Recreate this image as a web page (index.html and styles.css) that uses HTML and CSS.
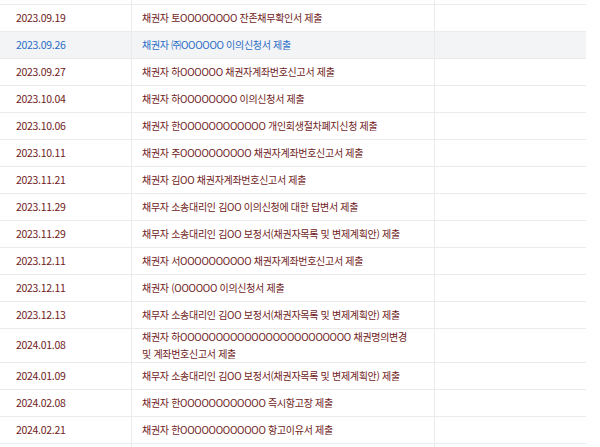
FILE: index.html
```
<!DOCTYPE html>
<html lang="ko">
<head>
<meta charset="utf-8">
<link rel="stylesheet" href="styles.css">
</head>
<body>
<div class="list">
  <div class="row"><div class="cell date"></div><div class="cell text"></div><div class="cell extra"></div></div>
  <div class="row"><div class="cell date">2023.09.19</div><div class="cell text">채권자 토OOOOOOOO 잔존채무확인서 제출</div><div class="cell extra"></div></div>
  <div class="row active"><div class="cell date">2023.09.26</div><div class="cell text">채권자 ㈜OOOOOO 이의신청서 제출</div><div class="cell extra"></div></div>
  <div class="row"><div class="cell date">2023.09.27</div><div class="cell text">채권자 하OOOOOO 채권자계좌번호신고서 제출</div><div class="cell extra"></div></div>
  <div class="row"><div class="cell date">2023.10.04</div><div class="cell text">채권자 하OOOOOOOO 이의신청서 제출</div><div class="cell extra"></div></div>
  <div class="row"><div class="cell date">2023.10.06</div><div class="cell text">채권자 한OOOOOOOOOOOO 개인회생절차폐지신청 제출</div><div class="cell extra"></div></div>
  <div class="row"><div class="cell date">2023.10.11</div><div class="cell text">채권자 주OOOOOOOOOO 채권자계좌번호신고서 제출</div><div class="cell extra"></div></div>
  <div class="row"><div class="cell date">2023.11.21</div><div class="cell text">채권자 김OO 채권자계좌번호신고서 제출</div><div class="cell extra"></div></div>
  <div class="row"><div class="cell date">2023.11.29</div><div class="cell text">채무자 소송대리인 김OO 이의신청에 대한 답변서 제출</div><div class="cell extra"></div></div>
  <div class="row"><div class="cell date">2023.11.29</div><div class="cell text">채무자 소송대리인 김OO 보정서(채권자목록 및 변제계획안) 제출</div><div class="cell extra"></div></div>
  <div class="row"><div class="cell date">2023.12.11</div><div class="cell text">채권자 서OOOOOOOOOO 채권자계좌번호신고서 제출</div><div class="cell extra"></div></div>
  <div class="row"><div class="cell date">2023.12.11</div><div class="cell text">채권자 (OOOOOO 이의신청서 제출</div><div class="cell extra"></div></div>
  <div class="row"><div class="cell date">2023.12.13</div><div class="cell text">채무자 소송대리인 김OO 보정서(채권자목록 및 변제계획안) 제출</div><div class="cell extra"></div></div>
  <div class="row"><div class="cell date">2024.01.08</div><div class="cell text">채권자 하OOOOOOOOOOOOOOOOOOOOOOOO 채권명의변경 및 계좌번호신고서 제출</div><div class="cell extra"></div></div>
  <div class="row"><div class="cell date">2024.01.09</div><div class="cell text">채무자 소송대리인 김OO 보정서(채권자목록 및 변제계획안) 제출</div><div class="cell extra"></div></div>
  <div class="row"><div class="cell date">2024.02.08</div><div class="cell text">채권자 한OOOOOOOOOOOO 즉시항고장 제출</div><div class="cell extra"></div></div>
  <div class="row"><div class="cell date">2024.02.21</div><div class="cell text">채권자 한OOOOOOOOOOOO 항고이유서 제출</div><div class="cell extra"></div></div>
  <div class="row"><div class="cell date"></div><div class="cell text"></div><div class="cell extra"></div></div>
</div>
</body>
</html>
```
FILE: styles.css
```
html, body {
  margin: 0;
  padding: 0;
  background: #ffffff;
}
body {
  font-family: "Noto Sans CJK KR", "Noto Sans", sans-serif;
  font-size: 10px;
  letter-spacing: -0.3px;
  color: #6f1b1b;
}
.list {
  width: 586px;
  margin-top: -22px;
}
.row {
  display: flex;
  min-height: 26px;
  border-bottom: 1px solid #ebebeb;
}
.row.active {
  background: #f3f4f6;
  color: #2a6cc6;
}
.cell {
  display: flex;
  align-items: center;
  line-height: 16.5px;
}
.date {
  width: 115px;
  padding-left: 16px;
  border-right: 1px solid #ebebeb;
  font-size: 10.5px;
}
.text {
  width: 272px;
  padding: 0 20px 0 10px;
  border-right: 1px solid #ebebeb;
}
.extra {
  flex: 1;
}
```
